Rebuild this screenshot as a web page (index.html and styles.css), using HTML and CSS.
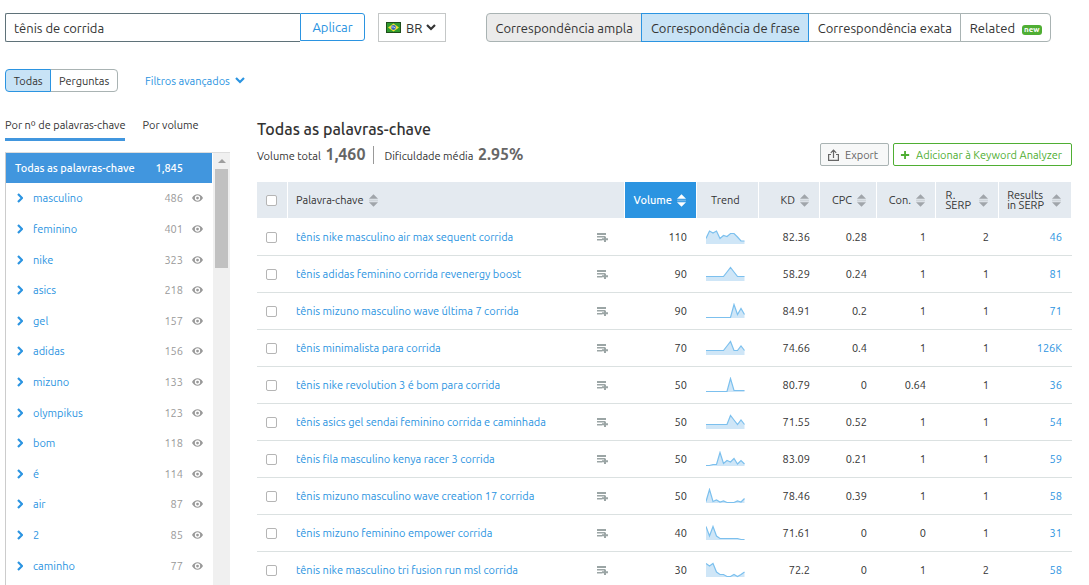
FILE: index.html
```html
<!DOCTYPE html>
<html lang="pt-BR">

<head>
    <meta charset="utf-8">
    <title>Keyword Magic Tool</title>
    <link rel="stylesheet" href="styles.css">
</head>

<body>

<svg class="sprite" aria-hidden="true">
    <symbol id="chevron" viewBox="0 0 10 7"><path d="M1 1l4 4 4-4" fill="none" stroke="currentColor" stroke-width="2.2"/></symbol>
    <symbol id="arrow" viewBox="0 0 6 10"><path d="M1 1l4 4-4 4" fill="none" stroke="currentColor" stroke-width="2.2"/></symbol>
    <symbol id="eye" viewBox="0 0 12 8"><path fill-rule="evenodd" d="M0 4C1.500 1.300 3.500 0 6 0s4.500 1.300 6 4c-1.500 2.700-3.500 4-6 4S1.500 6.700 0 4zm6-2.900a2.900 2.900 0 100 5.800 2.900 2.900 0 000-5.800z"/><circle cx="6" cy="4" r="1.500"/></symbol>
    <symbol id="sort" viewBox="0 0 10 14"><path class="up" d="M5 0l5 5H0z"/><path class="line" d="M0 6h10v2H0z" opacity=".3"/><path class="down" d="M0 9h10l-5 5z"/></symbol>
    <symbol id="addlist" viewBox="0 0 11 9"><path d="M0 0h9v2H0zM0 3h8v1.500H0zM0 6h5v1.500H0zM7 3.500h2V5.300H11V7.200H9v1.800H7V7.200H5V5.300h2z"/></symbol>
</svg>

<div class="toolbar">
    <form class="search">
        <input type="text" aria-label="Palavra-chave" value="tênis de corrida">
        <button type="button">Aplicar</button>
    </form>
    <div class="country">
        <svg class="flag" viewBox="0 0 15 11"><path fill="#1f4d1a" d="M0 0h15v11H0z"/><path fill="#2f9a2f" d="M1 1h13v9H1z"/><path fill="#f2e235" d="M7.500 1.500l5.500 4-5.500 4-5.500-4z"/><circle cx="7.500" cy="5.500" r="2.400" fill="#3565c4"/><path d="M5.400 5q2-.6 4 1" fill="none" stroke="#fff" stroke-width=".7"/></svg>
        <select aria-label="País">
            <option>BR</option>
        </select>
        <svg class="chevron"><use href="#chevron"/></svg>
    </div>
    <div class="match">
        <button type="button" class="broad">Correspondência ampla</button>
        <button type="button" class="active">Correspondência de frase</button>
        <button type="button">Correspondência exata</button>
        <button type="button">Related <span class="badge">new</span></button>
    </div>
</div>

<div class="filters">
    <div class="kind">
        <button type="button" class="active">Todas</button>
        <button type="button">Perguntas</button>
    </div>
    <a href="#" class="advanced">Filtros avançados <svg class="chevron"><use href="#chevron"/></svg></a>
</div>

<div class="content">
    <aside class="sidebar">
        <nav class="tabs">
            <a href="#" class="current">Por nº de palavras-chave</a>
            <a href="#">Por volume</a>
        </nav>
        <div class="groups">
            <div class="groups_list">
                <div class="groups_all"><span>Todas as palavras-chave</span><span class="count">1,845</span></div>
                <ul id="groups"></ul>
            </div>
            <div class="scrollbar"><div class="scroll_up"></div><div class="thumb"></div></div>
        </div>
    </aside>

    <main>
        <h1>Todas as palavras-chave</h1>
        <div class="summary">
            <div class="totals">
                <span class="total">Volume total <b>1,460</b></span>
                <span class="total">Dificuldade média <b>2.95%</b></span>
            </div>
            <div class="actions">
                <button type="button" class="export"><svg viewBox="0 0 11 12"><path d="M3 5.500H.6v5.900h9.800V5.500H8M5.500 9V1.500M2.800 3.800l2.700-2.700 2.700 2.700" fill="none" stroke="currentColor" stroke-width="1.200"/></svg>Export</button>
                <button type="button" class="analyzer"><svg viewBox="0 0 11 12"><path d="M4.500 1.500h2v3.500H10v2H6.500v3.500h-2V7H1V5h3.500z" fill="currentColor"/></svg>Adicionar à Keyword Analyzer</button>
            </div>
        </div>
        <table>
            <colgroup>
                <col class="c_check"><col><col class="c_volume"><col class="c_trend"><col class="c_kd"><col class="c_cpc"><col class="c_con"><col class="c_rserp"><col class="c_results">
            </colgroup>
            <thead>
                <tr>
                    <th class="check"><input type="checkbox" aria-label="Selecionar todas"></th>
                    <th class="name"><div class="head">Palavra-chave <svg class="sort"><use href="#sort"/></svg></div></th>
                    <th class="sorted"><div class="head">Volume <svg class="sort"><use href="#sort"/></svg></div></th>
                    <th class="trend">Trend</th>
                    <th><div class="head">KD <svg class="sort"><use href="#sort"/></svg></div></th>
                    <th><div class="head">CPC <svg class="sort"><use href="#sort"/></svg></div></th>
                    <th><div class="head">Con. <svg class="sort"><use href="#sort"/></svg></div></th>
                    <th><div class="head wide"><span>R.<br>SERP</span> <svg class="sort"><use href="#sort"/></svg></div></th>
                    <th><div class="head wide"><span>Results<br>in SERP</span> <svg class="sort"><use href="#sort"/></svg></div></th>
                </tr>
            </thead>
            <tbody id="keywords"></tbody>
        </table>
    </main>
</div>

<script>
    const groups = [
        ['masculino', 486], ['feminino', 401], ['nike', 323], ['asics', 218], ['gel', 157],
        ['adidas', 156], ['mizuno', 133], ['olympikus', 123], ['bom', 118], ['é', 114],
        ['air', 87], ['2', 85], ['caminho', 77]
    ];

    // keyword, volume, kd, cpc, con, r. serp, results, trend (0 = top of the chart)
    const keywords = [
        ['tênis nike masculino air max sequent corrida', 110, '82.36', '0.28', '1', 2, '46', [9.5, 2, 4, 2, 9.5, 6.5, 7.5, 4.5, 4.5, 8, 12, 12]],
        ['tênis adidas feminino corrida revenergy boost', 90, '58.29', '0.24', '1', 1, '81', [10.5, 10.5, 10.5, 10.5, 10.5, 10.5, 6, 1.5, 6, 10.5, 10.5, 10.5]],
        ['tênis mizuno masculino wave última 7 corrida', 90, '84.91', '0.2', '1', 1, '71', [14.5, 14.5, 14.5, 14.5, 14.5, 14.5, 14.5, 14.5, 1.5, 11.5, 5.5, 11.5]],
        ['tênis minimalista para corrida', 70, '74.66', '0.4', '1', 1, '126K', [10.5, 10.5, 10.5, 10.5, 10.5, 10.5, 6, 1.5, 10.5, 10.5, 6, 10.5]],
        ['tênis nike revolution 3 é bom para corrida', 50, '80.79', '0', '0.64', 1, '36', [14.5, 14.5, 14.5, 14.5, 14.5, 14.5, 14.5, 1.5, 13.5, 13.5, 13.5, 13.5]],
        ['tênis asics gel sendai feminino corrida e caminhada', 50, '71.55', '0.52', '1', 1, '54', [10.5, 10.5, 10.5, 10.5, 10.5, 10.5, 10.5, 1.5, 6, 10.5, 6, 10.5]],
        ['tênis fila masculino kenya racer 3 corrida', 50, '83.09', '0.21', '1', 1, '59', [14.5, 14.5, 13.5, 13.5, 1.5, 12.5, 9.5, 11, 7.5, 13, 9.5, 13]],
        ['tênis mizuno masculino wave creation 17 corrida', 50, '78.46', '0.39', '1', 1, '58', [13.5, 1.5, 13.5, 12, 14, 13, 14.5, 14.5, 14.5, 13, 14, 10.5]],
        ['tênis mizuno feminino empower corrida', 40, '71.61', '0', '0', 1, '31', [1.5, 11, 1.5, 11, 13.5, 13.5, 13.5, 13.5, 13.5, 13.5, 14.5, 14.5]],
        ['tênis nike masculino tri fusion run msl corrida', 30, '72.2', '0', '1', 2, '58', [1.5, 4, 1.5, 10, 12.5, 12.5, 14.5, 14.5, 12.5, 14.5, 12.5, 10]]
    ];

    function sparkline(trend) {
        const line = trend.map((y, i) => `${i * 3.5},${y}`).join(' ');
        return `<svg class="spark" viewBox="0 0 39 16"><polygon points="0,15 ${line} 38.5,15"/><polyline points="${line}"/></svg>`;
    }

    document.getElementById('groups').innerHTML = groups.map(([name, count]) => `
        <li>
            <a href="#"><svg class="arrow"><use href="#arrow"/></svg>${name}</a>
            <span class="count">${count}</span>
            <button type="button" aria-label="Excluir ${name}"><svg class="eye"><use href="#eye"/></svg></button>
        </li>`).join('');

    document.getElementById('keywords').innerHTML = keywords.map(([name, volume, kd, cpc, con, rserp, results, trend]) => `
        <tr>
            <td class="check"><input type="checkbox" aria-label="${name}"></td>
            <td class="name"><div class="keyword"><a href="#">${name}</a><svg class="addlist"><use href="#addlist"/></svg></div></td>
            <td>${volume}</td>
            <td class="trend">${sparkline(trend)}</td>
            <td>${kd}</td>
            <td>${cpc}</td>
            <td>${con}</td>
            <td>${rserp}</td>
            <td><a href="#">${results}</a></td>
        </tr>`).join('');
</script>

</body>

</html>
```
FILE: styles.css
```css
* {
    box-sizing: border-box;
}

body {
    margin: 0;
    height: 100vh;
    overflow: hidden;
    padding: 13px 17px 0 5px;
    display: flex;
    flex-direction: column;
    font-family: Ubuntu, Lato, "Open Sans", sans-serif;
    font-size: 11px;
    line-height: 16px;
    color: #333;
    background: #fff;
}

a {
    color: #2b94e1;
    text-decoration: none;
}

button, input, select {
    font-family: inherit;
    font-size: inherit;
    color: inherit;
    margin: 0;
}

button {
    background: #fff;
    white-space: nowrap;
    cursor: pointer;
}

.sprite {
    display: none;
}

/* top bar */
.toolbar {
    display: flex;
    font-size: 13px;
}

.search {
    display: flex;
    align-items: flex-start;
    width: 360px;
    margin-right: 13px;
}

.search input {
    flex: 1;
    min-width: 0;
    height: 29px;
    padding: 0 8px;
    border: 1px solid #5f7279;
    border-right: 0;
    border-radius: 2px 0 0 2px;
    background: #fff;
}

.search button {
    width: 65px;
    height: 28px;
    padding: 0;
    border: 1px solid #2b94e1;
    border-radius: 0 3px 3px 0;
    color: #2b94e1;
}

.country {
    display: flex;
    align-items: center;
    width: 68px;
    height: 29px;
    padding: 0 9px 0 7px;
    border: 1px solid #c4c7c7;
}

.country select {
    flex: 1;
    min-width: 0;
    padding: 0 0 0 5px;
    border: 0;
    background: none;
    appearance: none;
}

.flag {
    width: 15px;
    height: 11px;
}

.chevron {
    width: 10px;
    height: 7px;
}

.match {
    display: flex;
    width: 565px;
    margin-left: 40px;
}

.match button, .kind button {
    border: 1px solid #a9b3b3;
    padding: 0;
    margin-left: -1px;
}

.match button {
    flex: 1 1 auto;
    height: 29px;
    padding: 0 8px;
}

.match button:first-child, .kind button:first-child {
    margin-left: 0;
    border-radius: 4px 0 0 4px;
}

.match button:last-child, .kind button:last-child {
    border-radius: 0 4px 4px 0;
}

.match .broad {
    background: #ebebeb;
}

.match .active, .kind .active {
    position: relative;
    background: #c8e3f6;
    border-color: #2b94e1;
}

.badge {
    display: inline-block;
    margin-left: 4px;
    padding: 0 2px;
    border-radius: 3px;
    font-size: 8px;
    font-weight: bold;
    line-height: 10px;
    vertical-align: 1px;
    color: #fff;
    background: #4fae33;
}

/* filters */
.filters {
    display: flex;
    align-items: center;
    margin-top: 27px;
}

.kind {
    display: flex;
    width: 113px;
    margin-right: 27px;
}

.kind button {
    flex: 1 1 auto;
    height: 23px;
    padding: 0 7px;
}

.advanced {
    display: flex;
    align-items: center;
    gap: 5px;
}

/* sidebar */
.content {
    flex: 1;
    min-height: 0;
    display: flex;
    margin-top: 24px;
}

.sidebar {
    display: flex;
    flex-direction: column;
    width: 225px;
    margin-right: 27px;
}

.tabs {
    display: flex;
    gap: 17px;
    margin-bottom: 11px;
}

.tabs a {
    padding: 1px 0 5px;
    border-bottom: 3px solid transparent;
    color: #333;
}

.tabs .current {
    border-color: #4196de;
}

.groups {
    flex: 1;
    min-height: 0;
    display: flex;
    overflow: hidden;
    border-top: 1px solid #ddd;
    border-left: 1px solid #ccc;
}

.groups_list {
    flex: 1;
}

.groups_all {
    display: flex;
    justify-content: space-between;
    align-items: center;
    height: 30px;
    padding: 0 29px 0 9px;
    font-weight: 500;
    color: #fff;
    background: #4196de;
}

.groups ul {
    display: grid;
    grid-auto-rows: 1fr;
    height: 398px;
    margin: 0;
    padding: 0;
    list-style: none;
}

.groups li {
    display: flex;
    align-items: center;
    padding: 0 9px 0 11px;
}

.groups li a {
    flex: 1;
    display: flex;
    align-items: center;
    gap: 10px;
}

.groups li .count {
    color: #999;
}

.groups li button {
    display: flex;
    margin-left: 9px;
    padding: 0;
    border: 0;
}

.arrow {
    width: 6px;
    height: 10px;
}

.eye {
    width: 11px;
    height: 8px;
    fill: #999;
}

.scrollbar {
    display: flex;
    flex-direction: column;
    align-items: center;
    width: 18px;
    padding: 6px 2px 0;
    border-left: 1px solid #fff;
    background: #f0f0f0;
}

.scroll_up {
    border: 4px solid transparent;
    border-top: 0;
    border-bottom-color: #9e9e9e;
}

.thumb {
    width: 100%;
    height: 99px;
    margin-top: 6px;
    background: #c1c1c1;
}

/* keywords */
main {
    flex: 1;
    min-width: 0;
}

h1 {
    margin: 3px 0 0;
    font-size: 16px;
    line-height: 20px;
    font-weight: 500;
}

.summary {
    display: flex;
    justify-content: space-between;
    align-items: flex-end;
    height: 27px;
    margin-bottom: 16px;
}

.totals {
    display: flex;
    align-items: center;
    height: 23px;
}

.total b {
    margin-left: 2px;
    font-size: 16px;
    color: #666;
}

.total + .total {
    margin-left: 8px;
    padding-left: 10px;
    border-left: 1px solid #999;
}

.actions {
    display: flex;
    gap: 4px;
    height: 23px;
}

.actions button {
    display: flex;
    align-items: center;
    justify-content: center;
    gap: 6px;
    padding: 0 9px 0 6px;
    border: 1px solid #a9b3b3;
    border-radius: 2px;
}

.actions svg {
    width: 11px;
    height: 12px;
}

.actions .export {
    width: 69px;
    color: #666;
    background: #f7f8f8;
}

.actions .analyzer {
    width: 179px;
    color: #4fae33;
    border-color: #4fae33;
}

table {
    width: 100%;
    table-layout: fixed;
    border-collapse: separate;
    border-spacing: 0;
}

.c_check { width: 31px; }
.c_volume { width: 72px; }
.c_trend { width: 62px; }
.c_kd { width: 61px; }
.c_cpc { width: 57px; }
.c_con { width: 59px; }
.c_rserp { width: 63px; }
.c_results { width: 73px; }

th {
    height: 37px;
    padding: 0 10px 0 9px;
    font-weight: normal;
    white-space: nowrap;
    background: #e4eaf0;
    border-right: 1px solid #fff;
    border-bottom: 1px solid #fff;
}

td {
    height: 37px;
    padding: 0 10px 0 9px;
    text-align: right;
    border-bottom: 1px solid #dbe1e1;
}

th.check, td.check {
    padding: 0 0 0 9px;
    text-align: left;
}

.check input {
    display: block;
    width: 11px;
    height: 11px;
    appearance: none;
    border: 1px solid #b5b5b5;
    border-radius: 2px;
    background: #fff;
}

th.name, td.name {
    padding-left: 8px;
    text-align: left;
}

.head {
    display: flex;
    align-items: center;
    justify-content: flex-end;
    gap: 5px;
}

.name .head {
    justify-content: flex-start;
}

.head.wide {
    gap: 8px;
    line-height: 10px;
    text-align: left;
}

.sort {
    width: 9px;
    height: 13px;
    flex: none;
    fill: #a0a5aa;
}

th.sorted {
    font-weight: 500;
    color: #fff;
    background: #2b94e1;
}

.sorted .sort {
    fill: #fff;
}

th.trend {
    padding-left: 14px;
    text-align: left;
}

.keyword {
    display: flex;
    align-items: center;
    justify-content: space-between;
    padding-right: 7px;
}

.addlist {
    width: 11px;
    height: 9px;
    fill: #9ba5a5;
}

.spark {
    display: block;
    width: 39px;
    height: 16px;
}

.spark polygon {
    fill: #cfe6f7;
}

.spark polyline {
    fill: none;
    stroke: #7cc0ee;
    stroke-width: 1.2;
}
```
